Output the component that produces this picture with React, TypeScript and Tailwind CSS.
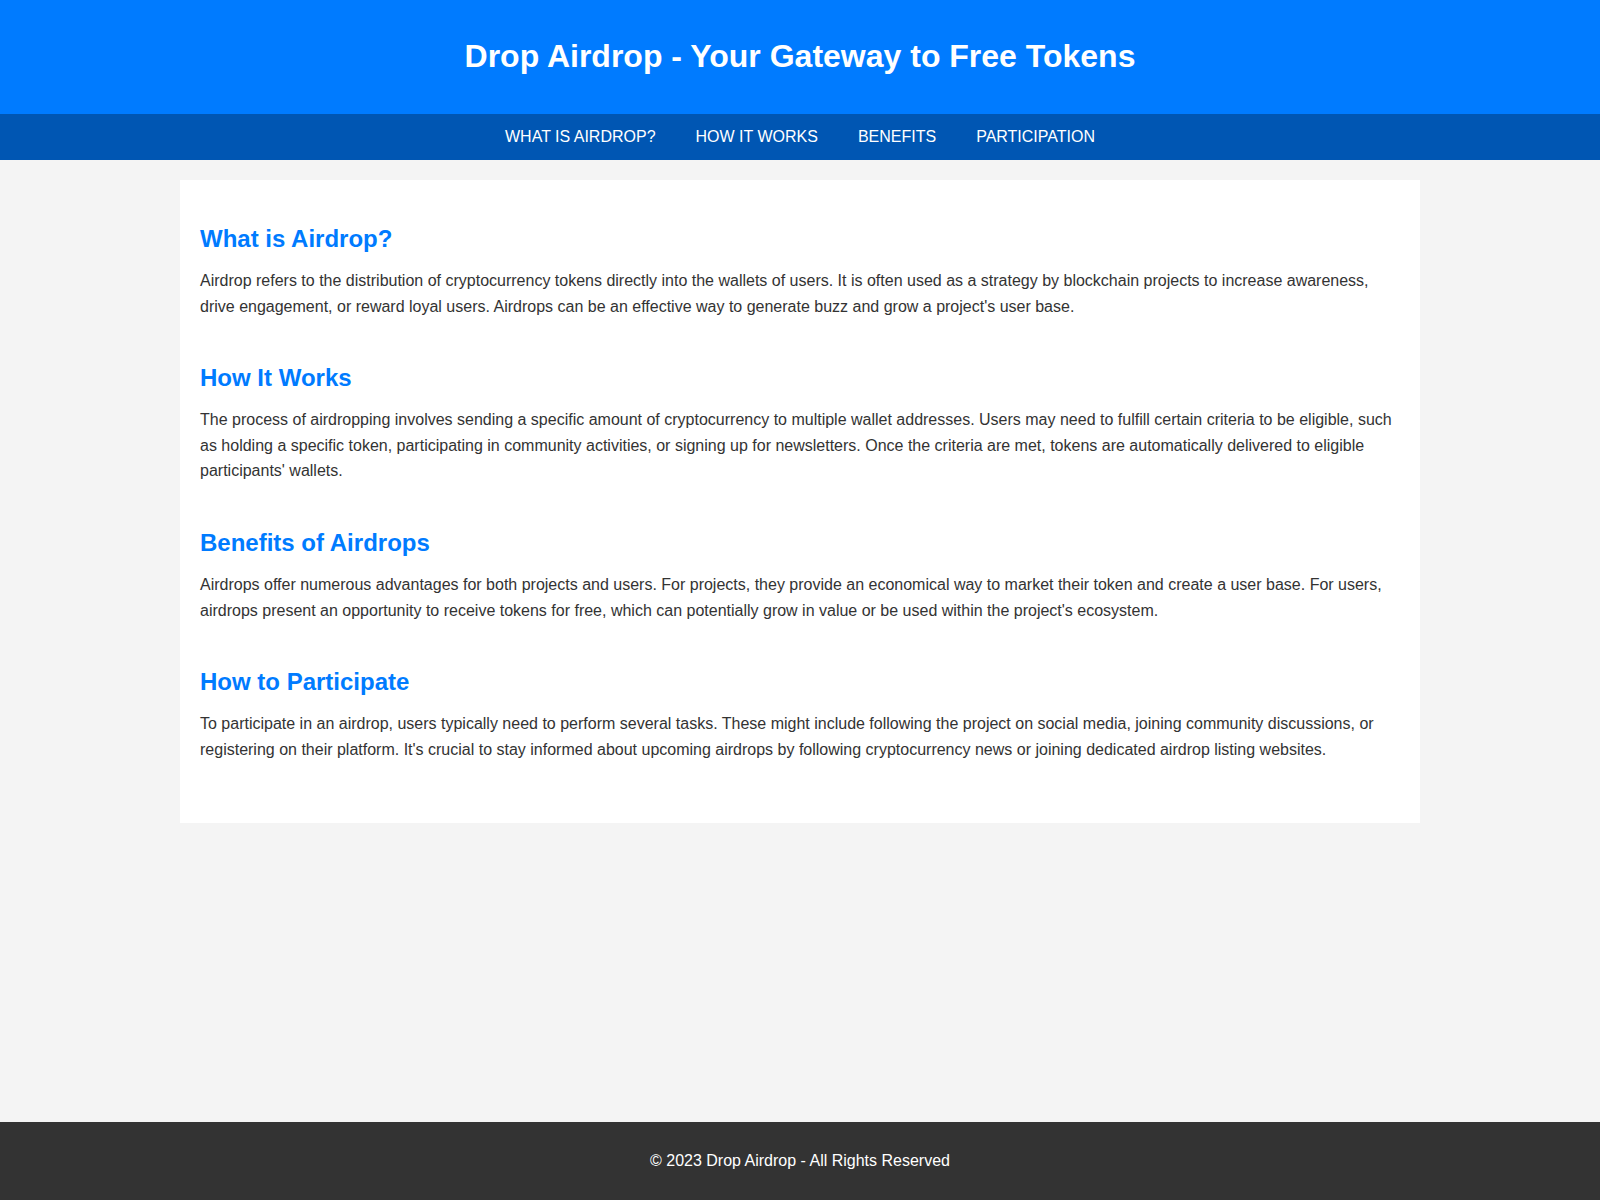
import React from 'react';

const links = ['What is Airdrop?', 'How It Works', 'Benefits', 'Participation'];

const sections = [
    {
        title: 'What is Airdrop?',
        body: "Airdrop refers to the distribution of cryptocurrency tokens directly into the wallets of users. It is often used as a strategy by blockchain projects to increase awareness, drive engagement, or reward loyal users. Airdrops can be an effective way to generate buzz and grow a project's user base.",
    },
    {
        title: 'How It Works',
        body: "The process of airdropping involves sending a specific amount of cryptocurrency to multiple wallet addresses. Users may need to fulfill certain criteria to be eligible, such as holding a specific token, participating in community activities, or signing up for newsletters. Once the criteria are met, tokens are automatically delivered to eligible participants' wallets.",
    },
    {
        title: 'Benefits of Airdrops',
        body: "Airdrops offer numerous advantages for both projects and users. For projects, they provide an economical way to market their token and create a user base. For users, airdrops present an opportunity to receive tokens for free, which can potentially grow in value or be used within the project's ecosystem.",
    },
    {
        title: 'How to Participate',
        body: "To participate in an airdrop, users typically need to perform several tasks. These might include following the project on social media, joining community discussions, or registering on their platform. It's crucial to stay informed about upcoming airdrops by following cryptocurrency news or joining dedicated airdrop listing websites.",
    },
];

export default function App() {
    return (
        <div className="min-h-screen flex flex-col bg-[#f4f4f4] text-[#333] font-['Liberation_Sans',Arial,sans-serif]">
            {/* Header */}
            <header className="h-[114px] bg-[#007bff] flex items-center justify-center pb-[2px]">
                <h1 className="text-[32px] font-bold text-white leading-[37px]">
                    Drop Airdrop - Your Gateway to Free Tokens
                </h1>
            </header>

            {/* Nav */}
            <nav className="h-[46px] bg-[#0056b3] flex justify-center gap-10 pt-[12px]">
                {links.map((l) => (
                    <a key={l} href="#" className="text-white uppercase text-[16px] leading-[22px]">
                        {l}
                    </a>
                ))}
            </nav>

            {/* Content */}
            <main className="w-[1240px] mx-auto mt-5 bg-white px-5 pt-[45px] pb-[61px] flex flex-col gap-[45px]">
                {sections.map((s) => (
                    <section key={s.title}>
                        <h2 className="text-[24px] font-bold text-[#007bff] leading-[28px] mb-[15px]">
                            {s.title}
                        </h2>
                        <p className="text-[16px] leading-[1.6]">{s.body}</p>
                    </section>
                ))}
            </main>

            {/* Footer */}
            <footer className="mt-auto h-[78px] bg-[#333] text-white flex items-center justify-center text-[16px]">
                <p>&copy; 2023 Drop Airdrop - All Rights Reserved</p>
            </footer>
        </div>
    );
}
